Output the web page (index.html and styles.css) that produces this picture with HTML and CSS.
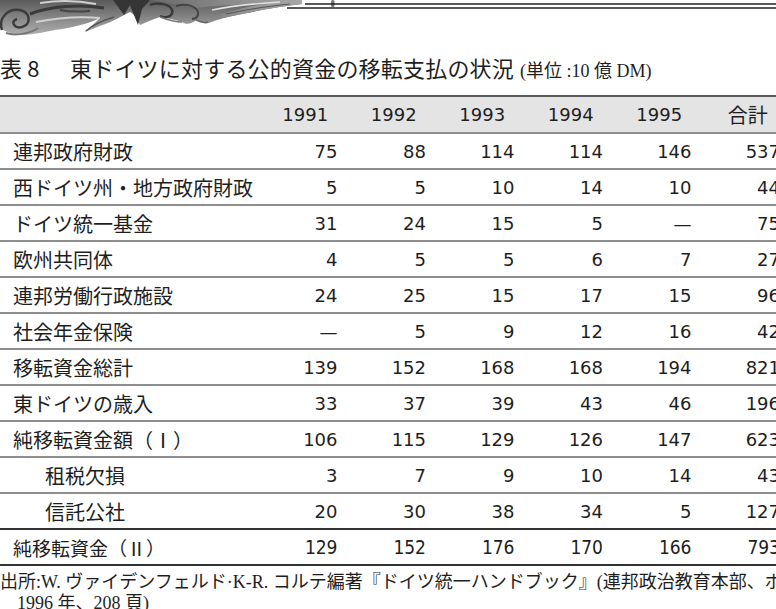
FILE: index.html
```html
<!DOCTYPE html>
<html lang="ja">
<head>
<meta charset="utf-8">
<title>表8 東ドイツに対する公的資金の移転支払の状況</title>
<link rel="stylesheet" href="styles.css">
</head>
<body>
<div class="page">
  <svg class="ornament" width="776" height="36" viewBox="0 0 776 36" xmlns="http://www.w3.org/2000/svg">
    <defs>
      <linearGradient id="arm" x1="0" y1="0" x2="1" y2="0">
        <stop offset="0" stop-color="#6a6a6a"/>
        <stop offset="1" stop-color="#a8a8a8"/>
      </linearGradient>
      <linearGradient id="leaf" x1="0" y1="0" x2="0" y2="1">
        <stop offset="0" stop-color="#5a5a5a"/>
        <stop offset="1" stop-color="#b0b0b0"/>
      </linearGradient>
    </defs>
    <path d="M0,0 L302,0 L302,4 C282,6 262,10 242,14 C226,17 216,20 209,23 C205,24 201,23 197,20 C191,24 186,25 182,22 C176,20 168,18 160,17 C152,20 146,22 140,25 C137,18 134,14 130,12 C122,16 112,22 100,26 C94,28 88,31 84,32 C90,27 96,22 100,18 C88,24 70,28 55,30 C45,32 35,34 25,35 C15,35 5,32 0,28 Z" fill="url(#leaf)"/>
    <path d="M150,0 L302,0 L302,4 C282,6 262,10 242,14 C228,17 218,19 210,20 C220,14 240,8 262,4 C240,4 215,6 195,8 Z" fill="url(#arm)"/>
    <path d="M113,0 L124,15 L130,5 L138,25 L142,9 L150,0 Z" fill="#353535"/>
    <path d="M2,30 C-2,18 8,8 20,10 C30,12 32,24 22,27 C14,29 10,21 17,19" fill="none" stroke="#3c3c3c" stroke-width="2.5"/>
    <path d="M6,33 C14,36 30,34 38,28" fill="none" stroke="#777" stroke-width="2"/>
    <path d="M30,14 C50,6 80,4 104,8" fill="none" stroke="#3a3a3a" stroke-width="3"/>
    <path d="M36,22 C56,18 80,16 100,18" fill="none" stroke="#d0d0d0" stroke-width="2"/>
    <path d="M40,3 C60,0 80,1 96,4" fill="none" stroke="#cfcfcf" stroke-width="2"/>
    <path d="M60,10 C70,12 78,12 90,11" fill="none" stroke="#444" stroke-width="2"/>
    <path d="M86,31 C94,24 104,20 114,17" fill="none" stroke="#555" stroke-width="1.5"/>
    <path d="M150,5 C158,2 170,4 172,10 C174,16 166,19 160,16" fill="none" stroke="#3a3a3a" stroke-width="2.5"/>
    <path d="M176,6 C186,3 196,6 198,12 C199,16 196,19 192,19" fill="none" stroke="#444" stroke-width="2"/>
    <path d="M160,17 C168,20 176,22 182,22" fill="none" stroke="#777" stroke-width="1.5"/>
    <path d="M196,20 C200,22 204,23 208,22" fill="none" stroke="#666" stroke-width="1.5"/>
    <path d="M212,10 C230,6 250,4 280,2" fill="none" stroke="#e0e0e0" stroke-width="1.5"/>
    <path d="M226,14 C244,10 262,7 290,4" fill="none" stroke="#555" stroke-width="1"/>
    <rect x="331" y="0" width="3.5" height="7" rx="1.5" fill="#777"/>
    <line x1="305" y1="4" x2="776" y2="4" stroke="#222" stroke-width="1.5"/>
    <line x1="287" y1="8" x2="776" y2="8" stroke="#222" stroke-width="1.5"/>
  </svg>

  <h1 class="title"><span class="tno">表 8</span>東ドイツに対する公的資金の移転支払の状況<span class="unit">(単位 :10 億 DM)</span></h1>

  <table class="data">
    <colgroup>
      <col class="c-label"><col class="c-num"><col class="c-num"><col class="c-num"><col class="c-num"><col class="c-num"><col class="c-num">
    </colgroup>
    <thead>
      <tr><th class="lab"></th><th>1991</th><th>1992</th><th>1993</th><th>1994</th><th>1995</th><th class="jp">合計</th></tr>
    </thead>
    <tbody>
      <tr><td class="lab">連邦政府財政</td><td>75</td><td>88</td><td>114</td><td>114</td><td>146</td><td>537</td></tr>
      <tr><td class="lab">西ドイツ州・地方政府財政</td><td>5</td><td>5</td><td>10</td><td>14</td><td>10</td><td>44</td></tr>
      <tr><td class="lab">ドイツ統一基金</td><td>31</td><td>24</td><td>15</td><td>5</td><td>—</td><td>75</td></tr>
      <tr><td class="lab">欧州共同体</td><td>4</td><td>5</td><td>5</td><td>6</td><td>7</td><td>27</td></tr>
      <tr><td class="lab">連邦労働行政施設</td><td>24</td><td>25</td><td>15</td><td>17</td><td>15</td><td>96</td></tr>
      <tr><td class="lab">社会年金保険</td><td>—</td><td>5</td><td>9</td><td>12</td><td>16</td><td>42</td></tr>
      <tr><td class="lab">移転資金総計</td><td>139</td><td>152</td><td>168</td><td>168</td><td>194</td><td>821</td></tr>
      <tr><td class="lab">東ドイツの歳入</td><td>33</td><td>37</td><td>39</td><td>43</td><td>46</td><td>196</td></tr>
      <tr><td class="lab">純移転資金額（Ⅰ）</td><td>106</td><td>115</td><td>129</td><td>126</td><td>147</td><td>623</td></tr>
      <tr><td class="lab sub">租税欠損</td><td>3</td><td>7</td><td>9</td><td>10</td><td>14</td><td>43</td></tr>
      <tr class="before-total"><td class="lab sub">信託公社</td><td>20</td><td>30</td><td>38</td><td>34</td><td>5</td><td>127</td></tr>
      <tr class="total"><td class="lab">純移転資金（Ⅱ）</td><td>129</td><td>152</td><td>176</td><td>170</td><td>166</td><td>793</td></tr>
    </tbody>
  </table>

  <p class="source"><span class="line1">出所:W. ヴァイデンフェルド·K-R. コルテ編著『ドイツ統一ハンドブック』(連邦政治教育本部、ボン、</span><span class="line2">1996 年、208 頁)</span></p>
</div>
</body>
</html>
```

FILE: styles.css
```css
html, body {
  margin: 0;
  padding: 0;
  background: #ffffff;
  overflow: hidden;
}

.page {
  width: 776px;
  height: 609px;
  overflow: hidden;
  color: #1e1e1e;
  font-family: "Noto Sans CJK JP", "DejaVu Sans", sans-serif;
}

.ornament {
  display: block;
}

.title {
  margin: 13px 0 0 0;
  height: 36px;
  line-height: 36px;
  font-size: 22px;
  font-weight: 400;
  white-space: nowrap;
  letter-spacing: 0.2px;
}

.tno {
  display: inline-block;
  width: 70px;
}

.unit {
  margin-left: 6px;
  font-family: "Liberation Serif", "Noto Sans CJK JP", serif;
  font-size: 18px;
  letter-spacing: 0;
}

.data {
  margin-top: 10px;
  width: 792px;
  table-layout: fixed;
  border-collapse: collapse;
  font-family: "DejaVu Sans", "Noto Sans CJK JP", sans-serif;
}

.c-label { width: 261px; }
.c-num { width: 88.5px; }

.data th,
.data td {
  height: 34px;
  padding: 0 12px 0 0;
  border-bottom: 2px solid #8e8e8e;
  font-size: 18px;
  font-weight: 400;
  text-align: right;
  vertical-align: middle;
  white-space: nowrap;
}

.data thead th {
  height: 35px;
  background: #e4e4e4;
  border-top: 2px solid #5a5a5a;
  text-align: center;
  padding: 0;
}

.data th.jp {
  font-family: "Noto Sans CJK JP", sans-serif;
  font-size: 20px;
}

.data .lab {
  padding: 0 0 0 13px;
  text-align: left;
  font-family: "Noto Sans CJK JP", sans-serif;
  font-size: 20px;
}

.data .lab.sub {
  padding-left: 45px;
}

.data tr.before-total td {
  border-bottom: 2px solid #333;
}

.data tr.total td {
  border-bottom: 2px solid #333;
  font-family: "DejaVu Sans Condensed", "DejaVu Sans", sans-serif;
  font-size: 19px;
}

.data tr.total td.lab {
  font-family: "Noto Sans CJK JP", sans-serif;
  font-size: 19px;
}

.source {
  margin: 6px 0 0 0;
  width: 820px;
  font-family: "Liberation Serif", "Noto Sans CJK JP", serif;
  font-size: 18px;
  line-height: 21px;
}

.source .line1,
.source .line2 {
  display: block;
  white-space: nowrap;
}

.source .line2 {
  padding-left: 17px;
}
```
